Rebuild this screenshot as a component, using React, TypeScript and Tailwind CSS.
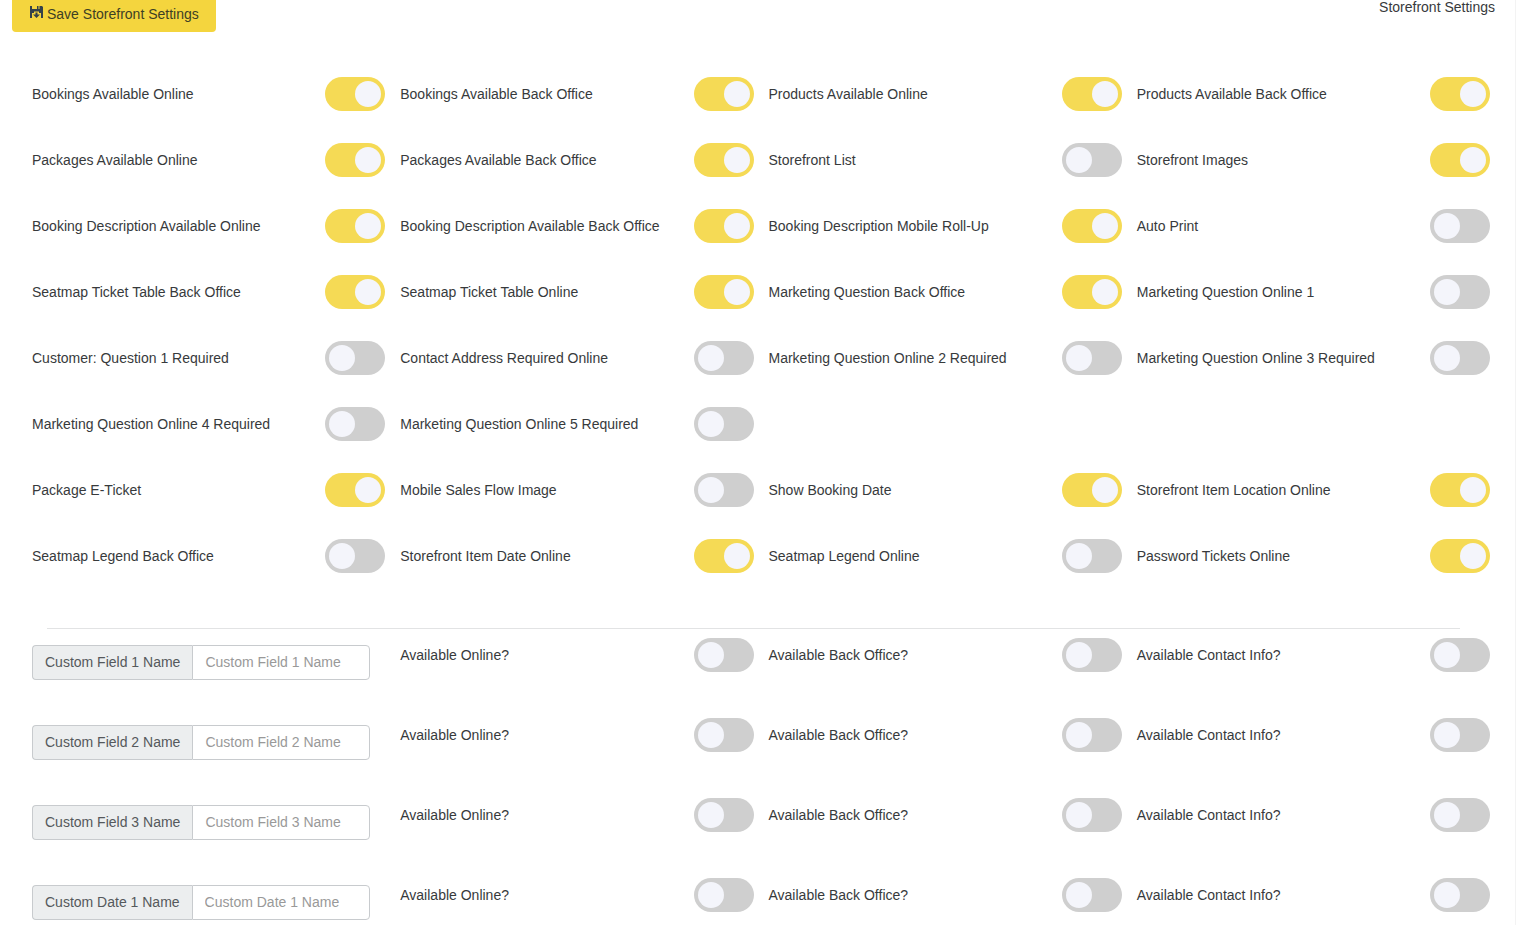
import React, { useState } from 'react';

type Setting = { label: string; on: boolean };

const generalSettings: Setting[] = [
  { label: 'Bookings Available Online', on: true },
  { label: 'Bookings Available Back Office', on: true },
  { label: 'Products Available Online', on: true },
  { label: 'Products Available Back Office', on: true },
  { label: 'Packages Available Online', on: true },
  { label: 'Packages Available Back Office', on: true },
  { label: 'Storefront List', on: false },
  { label: 'Storefront Images', on: true },
  { label: 'Booking Description Available Online', on: true },
  { label: 'Booking Description Available Back Office', on: true },
  { label: 'Booking Description Mobile Roll-Up', on: true },
  { label: 'Auto Print', on: false },
  { label: 'Seatmap Ticket Table Back Office', on: true },
  { label: 'Seatmap Ticket Table Online', on: true },
  { label: 'Marketing Question Back Office', on: true },
  { label: 'Marketing Question Online 1', on: false },
  { label: 'Customer: Question 1 Required', on: false },
  { label: 'Contact Address Required Online', on: false },
  { label: 'Marketing Question Online 2 Required', on: false },
  { label: 'Marketing Question Online 3 Required', on: false },
  { label: 'Marketing Question Online 4 Required', on: false },
  { label: 'Marketing Question Online 5 Required', on: false },
];

const displaySettings: Setting[] = [
  { label: 'Package E-Ticket', on: true },
  { label: 'Mobile Sales Flow Image', on: false },
  { label: 'Show Booking Date', on: true },
  { label: 'Storefront Item Location Online', on: true },
  { label: 'Seatmap Legend Back Office', on: false },
  { label: 'Storefront Item Date Online', on: true },
  { label: 'Seatmap Legend Online', on: false },
  { label: 'Password Tickets Online', on: true },
];

const customFields = ['Custom Field 1 Name', 'Custom Field 2 Name', 'Custom Field 3 Name', 'Custom Date 1 Name'];
const fieldOptions = ['Available Online?', 'Available Back Office?', 'Available Contact Info?'];

const SaveIcon = () => (
  <svg className="h-[13px] w-[14px]" viewBox="0 0 14 13" fill="#34424a" aria-hidden="true">
    <path d="M1 0h2v3h5V0h1.500v3h1V0H13l1 1v11h-2V7h-2V5.500H5V7H3v5H1z" />
    <path d="M6.500 6.500h2v2h2.500l-3.500 3.500L4 8.500h2.500z" />
  </svg>
);

const ToggleField = ({ id, label, on }: Setting & { id: string }) => {
  const [checked, setChecked] = useState(on);

  return (
    <div className="flex h-[34px] items-center justify-between pl-[15px]">
      <label htmlFor={id}>{label}</label>
      <input
        id={id}
        type="checkbox"
        checked={checked}
        onChange={(e) => setChecked(e.target.checked)}
        className="h-[34px] w-[60px] shrink-0 cursor-pointer appearance-none rounded-full bg-[#cfcfcf] p-1 before:block before:size-[26px] before:rounded-full before:bg-[#f4f5fb] checked:bg-[#f5da55] checked:before:ml-[26px]"
      />
    </div>
  );
};

const SettingsGrid = ({ name, settings }: { name: string; settings: Setting[] }) => (
  <div className="grid grid-cols-4 gap-y-8">
    {settings.map((setting, i) => (
      <ToggleField key={setting.label} id={`${name}-${i}`} {...setting} />
    ))}
  </div>
);

const CustomFieldRow = ({ name, index }: { name: string; index: number }) => (
  <div className="grid grid-cols-4">
    <div className="flex px-[15px] pt-[7px]">
      <label
        htmlFor={`custom-${index}`}
        className="flex h-[35px] shrink-0 items-center rounded-l border border-r-0 border-[#c8cbce] bg-[#eceeef] px-3 pb-0.5 text-[#55595c]"
      >
        {name}
      </label>
      <input
        id={`custom-${index}`}
        type="text"
        placeholder={name}
        className="h-[35px] w-full min-w-0 rounded-r border border-[#c8cbce] bg-white px-3 pb-0.5 outline-none placeholder:text-[#999999]"
      />
    </div>
    {fieldOptions.map((option, i) => (
      <ToggleField key={option} id={`custom-${index}-${i}`} label={option} on={false} />
    ))}
  </div>
);

const App = () => {
  return (
    <div className="bg-white font-['Liberation_Sans',Arial,sans-serif] text-sm text-[#373a3c]">
      <main className="mr-[14px] border-r border-[#f3f3f3] pb-[5px]">
        <header className="flex items-start justify-between pr-5 pl-3">
          <button
            type="button"
            className="flex h-8 items-start gap-1 rounded-b bg-[#f4d53e] px-[17px] pt-1 text-[#3d4025]"
          >
            <span className="pt-[2px]">
              <SaveIcon />
            </span>
            Save Storefront Settings
          </button>
          <h1 className="leading-[14px]">Storefront Settings</h1>
        </header>

        <div className="pt-[45px] pr-[25px] pl-[17px]">
          <div className="space-y-8">
            <SettingsGrid name="general" settings={generalSettings} />
            <SettingsGrid name="display" settings={displaySettings} />
          </div>

          <hr className="mx-[30px] mt-[55px] mb-[9px] border-[#e2e3e4]" />

          <div className="space-y-[38px]">
            {customFields.map((name, i) => (
              <CustomFieldRow key={name} name={name} index={i} />
            ))}
          </div>
        </div>
      </main>
    </div>
  );
};

export default App;
